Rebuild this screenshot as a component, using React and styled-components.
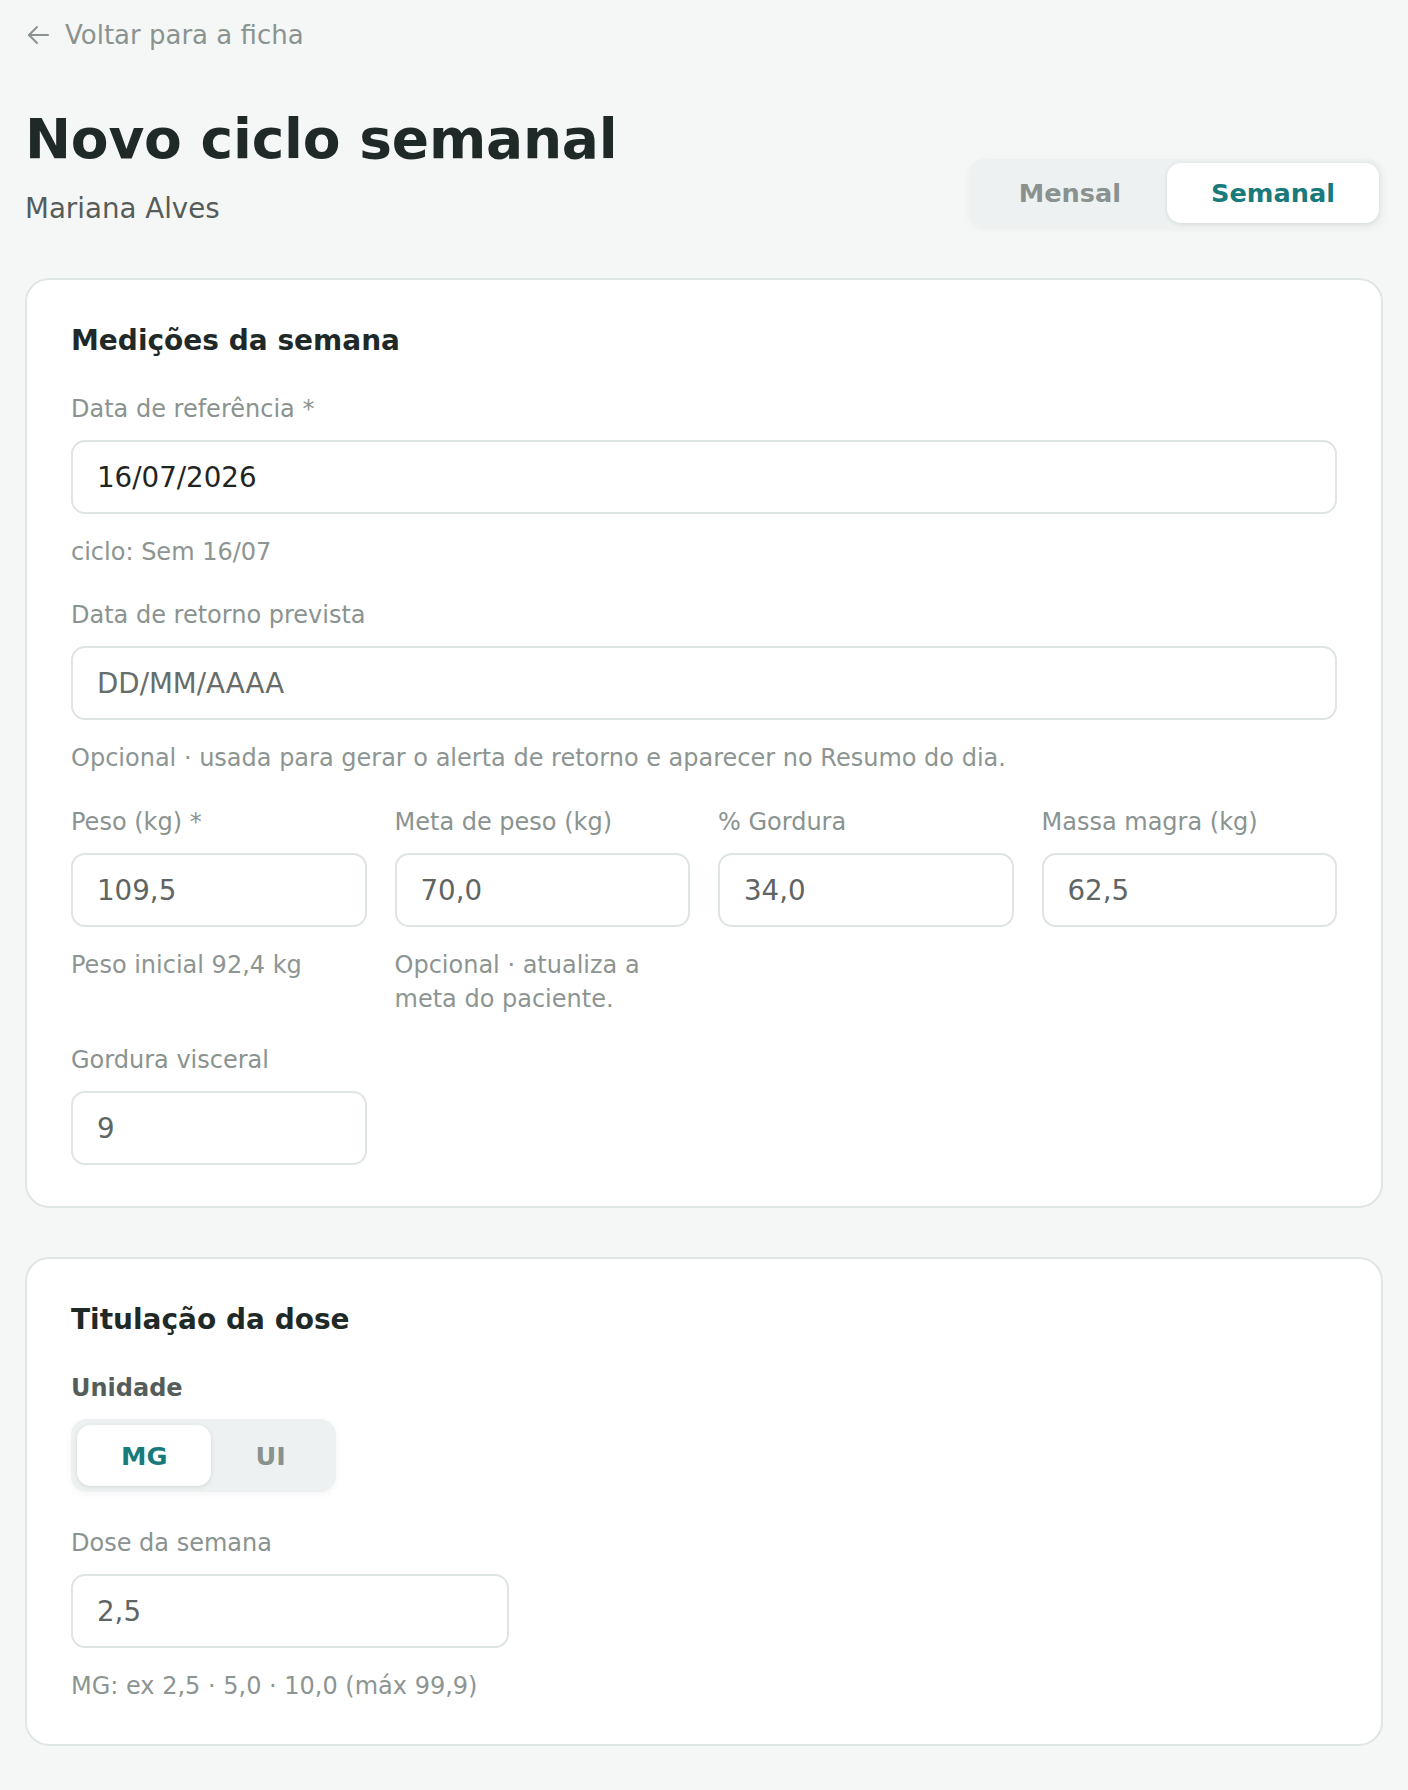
import React from 'react';
import styled, { createGlobalStyle } from 'styled-components';

const GlobalStyle = createGlobalStyle`
  * { box-sizing: border-box; }
  body {
    margin: 0;
    background: #f5f7f6;
    font-family: "DejaVu Sans", "Noto Sans", sans-serif;
    color: #1f2a28;
  }
`;

const Page = styled.div`
  padding: 18px 25px 45px;
`;

const BackLink = styled.a`
  display: inline-flex;
  align-items: center;
  gap: 16px;
  padding-left: 2px;
  font-size: 26px;
  line-height: 34px;
  color: #8a9390;
  text-decoration: none;
  cursor: pointer;
`;

const Header = styled.div`
  display: flex;
  justify-content: space-between;
  align-items: flex-end;
  margin-top: 56px;
`;

const TitleBlock = styled.div`
  display: flex;
  flex-direction: column;
  gap: 20px;
`;

const Title = styled.h1`
  margin: 0;
  font-size: 55px;
  line-height: 63px;
  font-weight: 700;
  letter-spacing: -0.2px;
  color: #1f2a28;
`;

const Subtitle = styled.div`
  font-size: 27.7px;
  line-height: 36px;
  color: #555d5b;
`;

const Segmented = styled.div`
  display: inline-flex;
  padding: ${(p) => p.$pad}px;
  background: #eef1f1;
  border-radius: 16px;
  box-shadow: 0 2px 6px rgba(30, 50, 45, 0.05);
`;

const SegButton = styled.button`
  border: none;
  height: ${(p) => p.$h}px;
  padding: 0 ${(p) => p.$px}px;
  border-radius: 14px;
  font-family: inherit;
  font-size: 25.6px;
  font-weight: 700;
  background: ${(p) => (p.$active ? '#ffffff' : 'transparent')};
  color: ${(p) => (p.$active ? '#187a7b' : '#8a9290')};
  box-shadow: ${(p) => (p.$active ? '0 1px 4px rgba(20, 40, 35, 0.12)' : 'none')};
  cursor: pointer;
`;

const Card = styled.section`
  background: #ffffff;
  border: 2px solid #e0e6e4;
  border-radius: 24px;
  padding: 44px 44px 41px;
  margin-top: ${(p) => p.$mt}px;
`;

const CardTitle = styled.h2`
  margin: 0 0 34px;
  font-size: 28px;
  line-height: 34px;
  font-weight: 700;
  color: #1f2a28;
`;

const Field = styled.div`
  display: flex;
  flex-direction: column;
  width: ${(p) => p.$w || '100%'};
  margin-top: ${(p) => p.$mt ?? 0}px;
`;

const Label = styled.label`
  font-size: 24px;
  line-height: 34px;
  color: ${(p) => (p.$strong ? '#555d5b' : '#8a9390')};
  font-weight: ${(p) => (p.$strong ? 700 : 400)};
  margin-bottom: 14px;
`;

const Input = styled.input`
  width: 100%;
  height: 74px;
  border: 2px solid #dfe5e3;
  border-radius: 14px;
  padding: 0 24px;
  font-family: inherit;
  font-size: 27.7px;
  color: ${(p) => (p.$dark ? '#1f2523' : '#5f6563')};
  background: #ffffff;
  outline: none;

  &::placeholder {
    color: #666d6b;
  }
`;

const Help = styled.div`
  margin-top: 21px;
  font-size: 24px;
  line-height: 34px;
  color: #8d9592;
`;

const Grid = styled.div`
  display: grid;
  grid-template-columns: repeat(4, 1fr);
  column-gap: 28px;
  align-items: start;
  margin-top: ${(p) => p.$mt}px;
`;

const BackArrow = () => (
  <svg width="22" height="20" viewBox="0 0 22 20" fill="none" stroke="#8a9390" strokeWidth="2" strokeLinecap="round" strokeLinejoin="round">
    <path d="M21 10H2" />
    <path d="M10 2L2 10l8 8" />
  </svg>
);

const measures = [
  { label: 'Peso (kg) *', value: '109,5', help: 'Peso inicial 92,4 kg' },
  { label: 'Meta de peso (kg)', value: '70,0', help: 'Opcional · atualiza a meta do paciente.' },
  { label: '% Gordura', value: '34,0' },
  { label: 'Massa magra (kg)', value: '62,5' },
];

export default function App() {
  return (
    <>
      <GlobalStyle />
      <Page>
        <BackLink>
          <BackArrow />
          Voltar para a ficha
        </BackLink>

        <Header>
          <TitleBlock>
            <Title>Novo ciclo semanal</Title>
            <Subtitle>Mariana Alves</Subtitle>
          </TitleBlock>
          <Segmented $pad={4}>
            <SegButton $h={60} $px={46}>Mensal</SegButton>
            <SegButton $h={60} $px={44} $active>Semanal</SegButton>
          </Segmented>
        </Header>

        <Card $mt={51}>
          <CardTitle>Medições da semana</CardTitle>

          <Field>
            <Label>Data de referência *</Label>
            <Input $dark defaultValue="16/07/2026" />
            <Help>ciclo: Sem 16/07</Help>
          </Field>

          <Field $mt={29}>
            <Label>Data de retorno prevista</Label>
            <Input placeholder="DD/MM/AAAA" />
            <Help>Opcional · usada para gerar o alerta de retorno e aparecer no Resumo do dia.</Help>
          </Field>

          <Grid $mt={30}>
            {measures.map((m) => (
              <Field key={m.label}>
                <Label>{m.label}</Label>
                <Input defaultValue={m.value} />
                {m.help && <Help>{m.help}</Help>}
              </Field>
            ))}
          </Grid>

          <Grid $mt={27}>
            <Field>
              <Label>Gordura visceral</Label>
              <Input defaultValue="9" />
            </Field>
          </Grid>
        </Card>

        <Card $mt={49}>
          <CardTitle>Titulação da dose</CardTitle>

          <Field>
            <Label $strong>Unidade</Label>
            <div>
              <Segmented $pad={6}>
                <SegButton $h={61} $px={44} $active>MG</SegButton>
                <SegButton $h={61} $px={44}>UI</SegButton>
              </Segmented>
            </div>
          </Field>

          <Field $mt={34} $w="438px">
            <Label>Dose da semana</Label>
            <Input defaultValue="2,5" />
          </Field>
          <Help>MG: ex 2,5 · 5,0 · 10,0 (máx 99,9)</Help>
        </Card>
      </Page>
    </>
  );
}
